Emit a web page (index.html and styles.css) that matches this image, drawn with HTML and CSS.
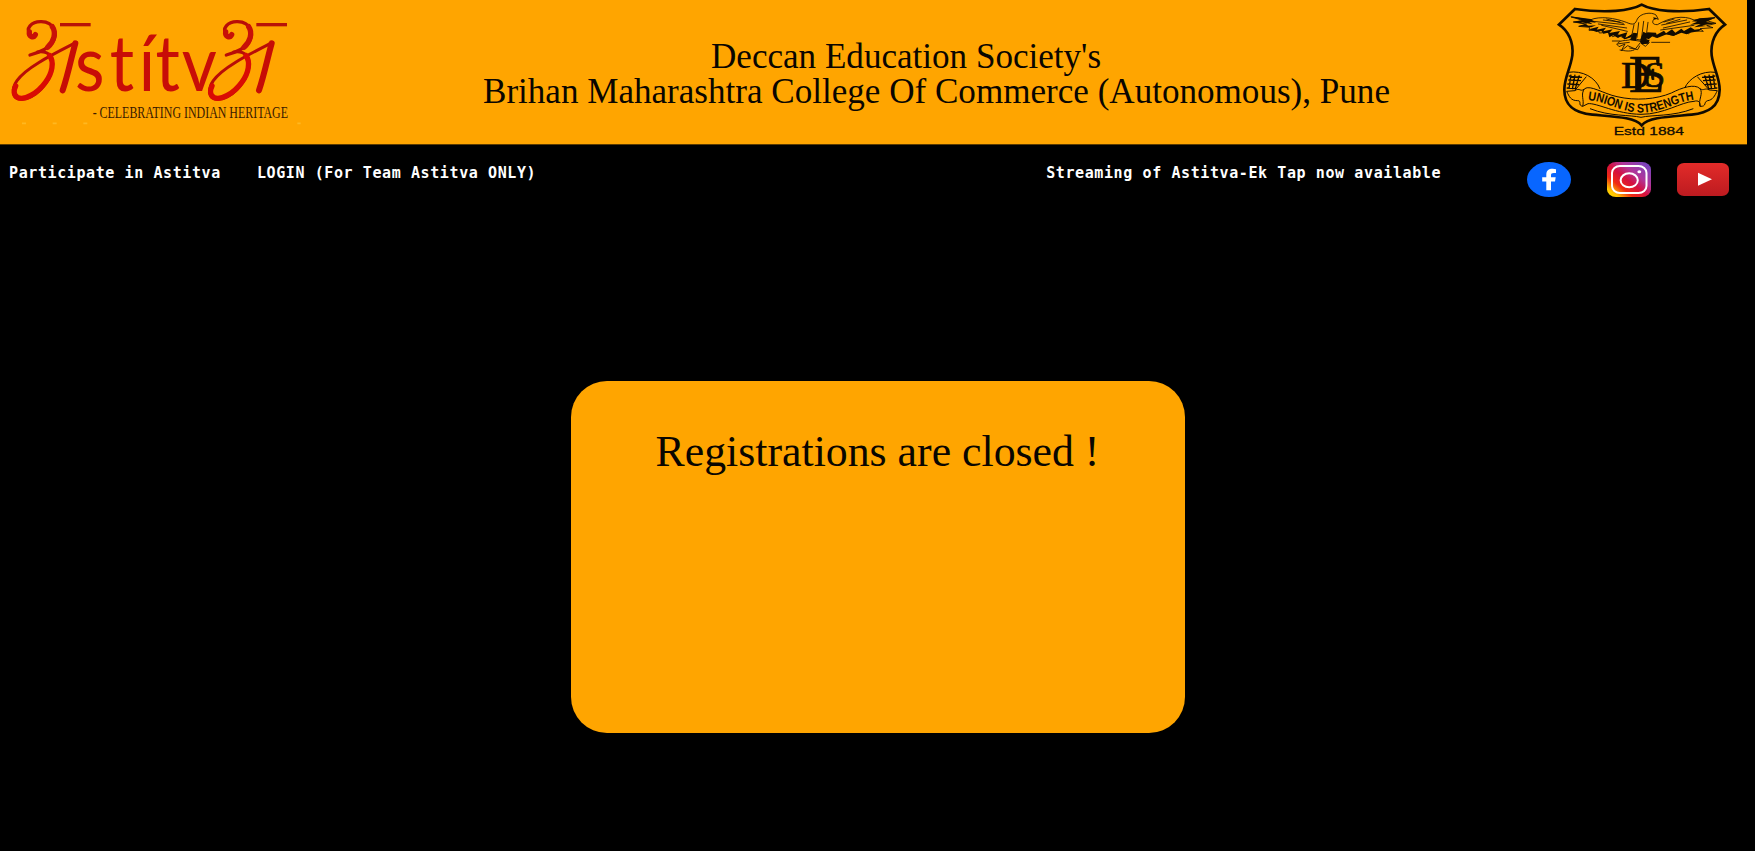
FILE: index.html
```html
<!DOCTYPE html>
<html lang="en">
<head>
<meta charset="utf-8">
<title>Astitva</title>
<link rel="stylesheet" href="styles.css">
</head>
<body>
<header class="banner">
  <svg class="logo" viewBox="0 0 930 432" role="img" aria-label="Astitva">
    <defs>
      <g id="akshar" fill="none" stroke-linecap="round" stroke-linejoin="round">
        <path d="M92 106C74 86 94 64 124 65C162 66 176 100 156 130C142 149 116 158 90 165" stroke="#b80d08" stroke-width="10"/>
        <path d="M88 96C86 110 100 115 106 104M157 80C170 99 161 126 143 142" stroke="#c81008" stroke-width="16"/>
        <path d="M112 156C147 151 163 171 157 205C149 252 104 296 65 298C35 299 34 266 51 242C79 201 165 160 229 127" stroke="#b80d08" stroke-width="9"/>
        <path d="M149 167C163 186 157 219 137 246C112 281 72 303 52 292C41 285 40 272 47 258" stroke="#d90b04" stroke-width="16"/>
        <path d="M226 130C214 172 204 224 188 271" stroke="#c60c06" stroke-width="18"/>
        <path d="M180 74H272" stroke="#b81208" stroke-width="10" stroke-linecap="butt"/>
      </g>
    </defs>
    <use href="#akshar"/>
    <use href="#akshar" x="589"/>
    <text class="logo-word" transform="scale(.88 1)" y="274" x="256 374 473 530 620">stítv</text>
    <text class="logo-tag" x="278" y="353" textLength="586" lengthAdjust="spacingAndGlyphs">- CELEBRATING INDIAN HERITAGE</text>
    <path d="M66 370h12M158 370h12M250 370h12M892 370h10" stroke="#ffb820" stroke-width="5"/>
  </svg>
  <h1 class="title">
    <span class="society">Deccan Education Society's</span>
    <span class="college">Brihan Maharashtra College Of Commerce (Autonomous), Pune</span>
  </h1>
  <svg class="crest" viewBox="0 0 621 432" role="img" aria-label="Deccan Education Society crest">
    <path d="M305 14C338 33 414 40 507 27L555 74C526 93 511 127 515 166C521 207 539 232 539 269C538 321 504 339 455 344C390 350 326 351 305 376C284 351 222 350 157 344C108 339 73 321 73 269C73 232 91 207 97 166C101 127 86 93 57 74L105 27C197 40 272 33 305 14Z" fill="none" stroke="#120b00" stroke-width="8"/>
    <g fill="none" stroke="#120b00" stroke-width="2.5" stroke-linecap="round" stroke-linejoin="round">
      <path d="M94 51L150 60C180 47 224 54 259 67C281 77 286 72 292 57C301 39 335 35 348 45L355 58L344 54C334 66 337 74 352 74C388 53 430 44 462 60L525 53L500 62L528 70L500 77L519 83L480 86L490 94L456 92L446 101L423 95L401 106L375 101L349 112L326 104L317 123L290 118L274 108L254 116L234 104L218 110L205 97L178 99L175 91L147 91L149 82L116 79L140 72L100 66L130 62Z"/>
      <path d="M160 64L253 74M175 72L260 84M190 60L240 66M365 75L440 60M370 84L449 66M380 70L420 58M362 90L462 76M185 76L262 94M200 57L250 70M372 66L402 57"/>
      <path d="M282 74L275 108M296 68L291 112M311 64L305 112M324 67L319 105"/>
      <path d="M234 128C244 119 261 123 270 119L303 124L320 117L328 128L316 139L301 128L286 147L263 137L244 152L255 132L237 140L230 132L268 127M217 123H240M335 127H389M240 150C254 152 268 156 282 150M269 144L293 149L299 138"/>
    </g>
    <g fill="#120b00">
      <path d="M90 49L152 57L168 68L148 66L158 73L122 67L146 77L168 76L154 82L116 79L136 73L98 66L126 61Z"/>
      <path d="M527 52L478 55L455 64L472 65L450 74L482 72L462 82L500 78L486 76L530 70L498 66Z"/>
      <path d="M146 88L176 80L170 89L198 83L190 94L218 88L208 99L240 93L232 106L262 97L256 114L280 100L274 112L254 118L244 108L234 114L220 106L208 112L204 98L190 101L184 93L170 96Z"/>
      <path d="M322 97L348 98L350 104L372 92L378 100L396 88L406 98L424 86L432 93L452 82L464 89L486 86L476 94L450 98L440 103L424 98L400 108L380 103L352 114L338 108L326 118L314 112Z"/>
      <path d="M280 98l12 2-4 22-18-2zM310 95l12 6-6 24-16-4zM299 122l30-3-4 12-20 2zM339 52l12 3-7 5z"/>
    </g>
    <g class="monogram">
      <text x="243" y="263" font-size="114" textLength="88" lengthAdjust="spacingAndGlyphs">D</text>
      <text x="267" y="276" font-size="160" textLength="106" lengthAdjust="spacingAndGlyphs">E</text>
      <text x="312" y="262" font-size="110" textLength="64" lengthAdjust="spacingAndGlyphs">S</text>
    </g>
    <g fill="none" stroke="#120b00" stroke-width="3">
      <path d="M85 217C126 210 168 233 180 267M526 217C486 211 447 235 434 264"/>
      <path d="M128 319C134 300 120 283 134 266C151 254 190 281 231 290C287 303 349 298 394 279C425 263 464 250 480 266C491 280 474 300 480 319C482 306 475 300 462 304C422 306 373 343 303 343C228 342 170 308 144 311Z"/>
      <path d="M128 319C112 316 127 302 113 302C92 302 88 290 80 274L104 272L139 230M480 319C502 320 489 306 503 302C518 300 524 288 532 272L508 270L472 230M104 272C120 262 120 276 132 268M508 270C494 262 492 274 480 266M150 326C210 350 270 344 303 352C336 344 400 350 460 326"/>
    </g>
    <path d="M86 228l40 4M85 240l38 2M82 252l36 2M80 264l28 2M93 224l-6 42M105 224l-8 44M118 226l-12 40M486 232l40-4M489 242l38-2M494 254l36-2M504 266l28-2M519 224l6 42M507 224l8 44M494 226l12 40" stroke="#120b00" stroke-width="4"/>
    <path id="motto" d="M143 300C204 306 242 338 306 338C367 338 414 301 472 298" fill="none"/>
    <text class="motto"><textPath href="#motto" textLength="330" lengthAdjust="spacingAndGlyphs">UNION IS STRENGTH</textPath></text>
    <text class="estd" x="221" y="406" textLength="211" lengthAdjust="spacingAndGlyphs">Estd 1884</text>
  </svg>
</header>
<nav class="nav">
  <a class="link">Participate in Astitva</a>
  <a class="link">LOGIN (For Team Astitva ONLY)</a>
  <a class="link stream">Streaming of Astitva-Ek Tap now available</a>
  <div class="social">
    <svg class="round-icon" viewBox="0 0 44 35" role="img" aria-label="Facebook">
      <ellipse cx="22" cy="17.5" rx="22" ry="17.5" fill="#0866ff"/>
      <path d="M19.3 28.2V19.5H15.2V15.3H19.3V13C19.3 8.5 21.5 6.8 25.8 6.8Q27.7 6.8 29 7.2V11H26.8C24.6 11 24 11.8 24 13.4V15.3H28.7L28 19.5H24V28.2Z" fill="#fff"/>
    </svg>
    <svg class="round-icon" viewBox="0 0 44 35" role="img" aria-label="Instagram">
      <defs>
        <linearGradient id="ig" x1="0" y1="1" x2="1" y2="0">
          <stop offset="0" stop-color="#ffe000"/><stop offset=".13" stop-color="#ffc400"/><stop offset=".3" stop-color="#f02a12"/><stop offset=".48" stop-color="#d5103f"/><stop offset=".66" stop-color="#b0369a"/><stop offset="1" stop-color="#6848c8"/>
        </linearGradient>
      </defs>
      <rect width="44" height="35" rx="9" ry="7.5" fill="url(#ig)"/>
      <rect x="5" y="4" width="34.5" height="27" rx="8" ry="7" fill="none" stroke="#fff" stroke-width="2"/>
      <ellipse cx="22.2" cy="18.3" rx="8.6" ry="7" fill="none" stroke="#fff" stroke-width="2"/>
      <ellipse cx="32.3" cy="9.8" rx="1.9" ry="1.5" fill="#fff"/>
    </svg>
    <svg class="video-icon" viewBox="0 0 52 33" role="img" aria-label="YouTube">
      <defs><linearGradient id="yt" x1="0" y1="0" x2="0" y2="1"><stop offset="0" stop-color="#e22b29"/><stop offset="1" stop-color="#bd1b20"/></linearGradient></defs>
      <rect width="52" height="33" rx="7" ry="6" fill="url(#yt)"/>
      <path d="M21 9.8L35 16.3L21 22.8Z" fill="#fff"/>
    </svg>
  </div>
</nav>
<main class="content">
  <section class="card"><p class="message">Registrations are closed !</p></section>
</main>
</body>
</html>
```
FILE: styles.css
```css
* { box-sizing: border-box; }
body {
  margin: 0;
  background: #000;
  height: 851px;
  overflow: hidden;
  font-family: "Liberation Serif", serif;
}
.banner {
  display: flex;
  width: 1747px;
  height: 145px;
  border-bottom: 1px solid #5c3b00;
  background: #ffa500;
}
.logo { width: 310px; height: 144px; flex: none; }
.logo-word {
  font-family: Lato, sans-serif;
  font-size: 232px;
  font-weight: 400;
  fill: #c80d07;
}
.logo-tag {
  font-family: "Liberation Serif", serif;
  font-size: 48px;
  fill: #3a1a00;
}
.title {
  flex: 1;
  display: flex;
  flex-direction: column;
  margin: 0;
  padding: 39px 0 0 173px;
  font-size: 35.1px;
  font-weight: 400;
  line-height: 35px;
  white-space: nowrap;
  color: #0a0600;
}
.society { padding-left: 228px; }
.crest { width: 207px; height: 144px; flex: none; }
.monogram { font-family: "Liberation Serif", serif; fill: #120b00; stroke: #120b00; stroke-width: 2; }
.motto { font: 700 38px "Liberation Sans", sans-serif; fill: #120b00; }
.estd { font: 400 33px "Liberation Sans", sans-serif; fill: #120b00; stroke: #120b00; stroke-width: .8; }
.nav {
  display: flex;
  align-items: flex-start;
  height: 63px;
  padding: 17px 0 0 9px;
  font: 700 15px/23px "DejaVu Sans Mono", monospace;
  letter-spacing: .6px;
  color: #fff;
  white-space: nowrap;
}
.link + .link { margin-left: 36px; }
.nav .stream { margin-left: 510px; }
.social { display: flex; align-items: center; margin-left: auto; padding-right: 26px; height: 35px; }
.round-icon { width: 44px; height: 35px; margin-right: 36px; }
.round-icon + .round-icon { margin-right: 26px; }
.video-icon { width: 52px; height: 33px; }
.content { display: flex; justify-content: center; padding-top: 173px; }
.card {
  width: 614px;
  height: 352px;
  padding-top: 45px;
  border-radius: 36px;
  background: #ffa500;
  text-align: center;
}
.message { margin: 0; font-size: 43.8px; line-height: 50px; color: #0a0600; }
```
